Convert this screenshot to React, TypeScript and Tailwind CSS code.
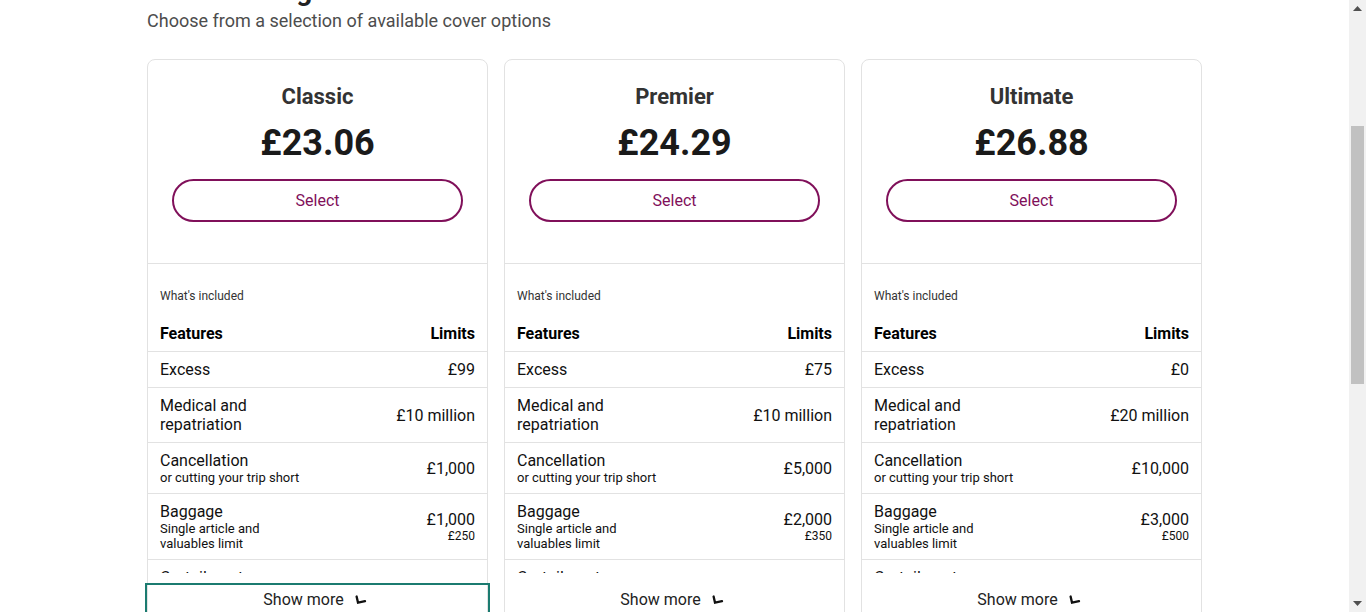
import { useLayoutEffect, useRef } from "react";

type Row = {
  name: string;
  sub?: string;
  value: string;
  extra?: string;
};

type Plan = {
  title: string;
  price: string;
  rows: Row[];
};

const plans: Plan[] = [
  {
    title: "Classic",
    price: "£23.06",
    rows: [
      { name: "Excess", value: "£99" },
      { name: "Medical and repatriation", value: "£10 million" },
      { name: "Cancellation", sub: "or cutting your trip short", value: "£1,000" },
      { name: "Baggage", sub: "Single article and valuables limit", value: "£1,000", extra: "£250" },
      { name: "Curtailment", sub: "coming home early", value: "£1,000" },
      { name: "Personal liability", value: "£2 million" },
    ],
  },
  {
    title: "Premier",
    price: "£24.29",
    rows: [
      { name: "Excess", value: "£75" },
      { name: "Medical and repatriation", value: "£10 million" },
      { name: "Cancellation", sub: "or cutting your trip short", value: "£5,000" },
      { name: "Baggage", sub: "Single article and valuables limit", value: "£2,000", extra: "£350" },
      { name: "Curtailment", sub: "coming home early", value: "£5,000" },
      { name: "Personal liability", value: "£2 million" },
    ],
  },
  {
    title: "Ultimate",
    price: "£26.88",
    rows: [
      { name: "Excess", value: "£0" },
      { name: "Medical and repatriation", value: "£20 million" },
      { name: "Cancellation", sub: "or cutting your trip short", value: "£10,000" },
      { name: "Baggage", sub: "Single article and valuables limit", value: "£3,000", extra: "£500" },
      { name: "Curtailment", sub: "coming home early", value: "£10,000" },
      { name: "Personal liability", value: "£2 million" },
    ],
  },
];

const ChevronIcon = () => (
  <svg width="17" height="10" viewBox="0 0 17 10" fill="none">
    <path d="M1.6 1.5 L3 7.6 L10 6.2" stroke="#111" strokeWidth="2.3" strokeLinecap="round" strokeLinejoin="miter" />
  </svg>
);

const PlanCard = ({ plan, focused }: { plan: Plan; focused?: boolean }) => {
  return (
    <div className="flex flex-col rounded-lg border border-[#e2e2e2] bg-white">
      <div className="flex flex-col items-center border-b border-[#e2e2e2] px-6 pt-[23px] pb-[41px]">
        <h2 className="text-[22px] leading-7 font-bold text-[#333]">{plan.title}</h2>
        <div className="mt-[10px] text-[36px] leading-[44px] font-bold text-[#1a1a1a]">{plan.price}</div>
        <button className="mt-[14px] h-[43px] w-full rounded-full border-2 border-[#80105a] text-base text-[#80105a]">
          Select
        </button>
      </div>

      <div className="px-3 pt-[24px] text-xs leading-4 text-[#333]">What's included</div>

      <div className="mt-5 flex items-center justify-between border-b border-[#e2e2e2] px-3 pb-2 text-base leading-[19px] font-bold text-black">
        <span>Features</span>
        <span>Limits</span>
      </div>

      <div className="h-[221px] overflow-hidden">
        {plan.rows.map((row) => (
          <div key={row.name} className="grid grid-cols-[150px_1fr] items-center border-b border-[#e2e2e2] px-3 py-2 text-[#111]">
            <div className="flex flex-col">
              <span className="text-base leading-[19px]">{row.name}</span>
              {row.sub && <span className="text-[13px] leading-[15px]">{row.sub}</span>}
            </div>
            <div className="flex flex-col items-end">
              <span className="text-base leading-[19px]">{row.value}</span>
              {row.extra && <span className="text-xs leading-[15px]">{row.extra}</span>}
            </div>
          </div>
        ))}
      </div>

      <button
        className={
          focused
            ? "mt-[13px] flex h-[28px] w-full items-center justify-center gap-[11px] bg-white text-base text-[#222] outline-2 outline-offset-1 outline-[#1b7b70]"
            : "mt-[13px] flex h-[28px] w-full items-center justify-center gap-[11px] bg-white text-base text-[#222]"
        }
      >
        <span>Show more</span>
        <ChevronIcon />
      </button>
      <div className="h-3" />
    </div>
  );
};

const ScrollBar = () => (
  <div className="flex h-screen w-[17px] shrink-0 flex-col bg-[#f1f1f1]">
    <div className="flex h-[17px] items-center justify-center">
      <svg width="9" height="5" viewBox="0 0 9 5">
        <path d="M0 5 L4.5 0 L9 5 Z" fill="#505050" />
      </svg>
    </div>
    <div className="flex-1 px-[2px] pt-[109px]">
      <div className="h-[258px] bg-[#c1c1c1]" />
    </div>
    <div className="flex h-[17px] items-center justify-center">
      <svg width="9" height="5" viewBox="0 0 9 5">
        <path d="M0 0 L9 0 L4.5 5 Z" fill="#505050" />
      </svg>
    </div>
  </div>
);

export default function App() {
  const scroller = useRef<HTMLDivElement>(null);

  useLayoutEffect(() => {
    if (scroller.current) scroller.current.scrollTop = 257;
  }, []);

  return (
    <div className="flex h-screen bg-white text-[#111]" style={{ fontFamily: "Roboto, 'Noto Sans', sans-serif" }}>
      <div ref={scroller} className="h-screen flex-1 overflow-hidden">
        <header className="flex h-[72px] items-center border-b border-[#e2e2e2] px-8">
          <span className="text-xl font-bold text-[#80105a]">Travel Insurance</span>
        </header>

        <div className="mx-auto w-[1055px]">
          <div className="flex h-[160px] items-center gap-6 text-sm text-[#555]">
            <span>1. Your trip</span>
            <span>2. Travellers</span>
            <span className="font-bold text-[#80105a]">3. Cover</span>
            <span>4. Payment</span>
          </div>

          <h1 className="text-[28px] leading-8 font-bold text-[#222]">Your coverage</h1>
          <p className="text-lg leading-7 text-[#4d4d4d]">Choose from a selection of available cover options</p>

          <div className="mt-[24px] grid grid-cols-3 gap-4">
            {plans.map((p, i) => (
              <PlanCard key={p.title} plan={p} focused={i === 0} />
            ))}
          </div>

          <div className="mt-10 flex h-[200px] flex-col gap-3 text-sm text-[#555]">
            <h3 className="text-lg font-bold text-[#222]">Important information</h3>
            <p>Please read the policy wording carefully before you buy.</p>
          </div>
        </div>

        <footer className="flex h-[246px] items-center justify-center bg-[#f4f4f4] text-sm text-[#666]">
          © Travel Insurance
        </footer>
      </div>
      <ScrollBar />
    </div>
  );
}
